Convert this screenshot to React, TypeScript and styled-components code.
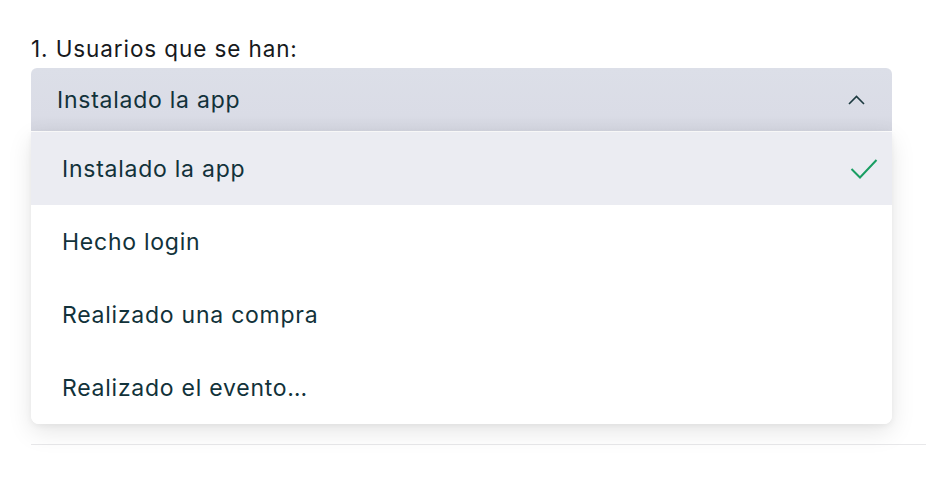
import React from "react";
import styled, { createGlobalStyle } from "styled-components";

const Global = createGlobalStyle`
  html, body { margin: 0; padding: 0; background: #ffffff; }
  body { font-family: Inter, "Noto Sans", sans-serif; }
`;

const Page = styled.div`
  padding: 35px 0 0 31px;
  width: 926px;
  height: 480px;
  box-sizing: border-box;
  overflow: hidden;
`;

const Label = styled.div`
  font-size: 22.5px;
  line-height: 27px;
  letter-spacing: 0.9px;
  color: #16191c;
  margin-bottom: 6px;
`;

const SelectWrap = styled.div`
  position: relative;
  width: 861px;
`;

const Trigger = styled.div`
  height: 63px;
  box-sizing: border-box;
  display: flex;
  align-items: center;
  justify-content: space-between;
  padding: 0 27px 0 26px;
  border-radius: 6px 6px 0 0;
  background: linear-gradient(180deg, #dcdfe8 0%, #dadce6 75%, #d3d5df 100%);
  color: #12323a;
  font-size: 23px;
  letter-spacing: 0.75px;
`;

const Menu = styled.ul`
  position: absolute;
  top: calc(100% + 1px);
  left: 0;
  width: 100%;
  margin: 0;
  padding: 0;
  list-style: none;
  background: #ffffff;
  border-radius: 0 0 8px 8px;
  box-shadow: 0 8px 24px rgba(0, 0, 0, 0.1), 0 2px 6px rgba(0, 0, 0, 0.05);
  overflow: hidden;
  z-index: 2;
`;

const Item = styled.li<{ $selected?: boolean }>`
  height: 73px;
  box-sizing: border-box;
  display: flex;
  align-items: center;
  justify-content: space-between;
  padding: 0 14px 0 31px;
  font-size: 23px;
  letter-spacing: 0.75px;
  color: #12323a;
  background: ${(p) => (p.$selected ? "#ebecf2" : "#ffffff")};
`;

const Divider = styled.hr`
  margin: 313px 0 0 0;
  border: none;
  border-top: 1px solid #e8e8ea;
`;

const Chevron = () => (
  <svg width="17" height="10" viewBox="0 0 17 10" fill="none">
    <path d="M1 9 L8.5 1.5 L16 9" stroke="#1d3a40" strokeWidth="1.6" />
  </svg>
);

const Check = () => (
  <svg width="28" height="24" viewBox="0 0 28 24" fill="none">
    <path d="M1.5 12 L10 20.5 L26.5 3" stroke="#1a9e63" strokeWidth="2" />
  </svg>
);

const options = ["Instalado la app", "Hecho login", "Realizado una compra", "Realizado el evento…"];

export default function App() {
  return (
    <>
      <Global />
      <Page>
        <Label>1. Usuarios que se han:</Label>
        <SelectWrap>
          <Trigger>
            <span>Instalado la app</span>
            <Chevron />
          </Trigger>
          <Menu>
            {options.map((o, i) => (
              <Item key={o} $selected={i === 0}>
                <span>{o}</span>
                {i === 0 && <Check />}
              </Item>
            ))}
          </Menu>
        </SelectWrap>
        <Divider />
      </Page>
    </>
  );
}
